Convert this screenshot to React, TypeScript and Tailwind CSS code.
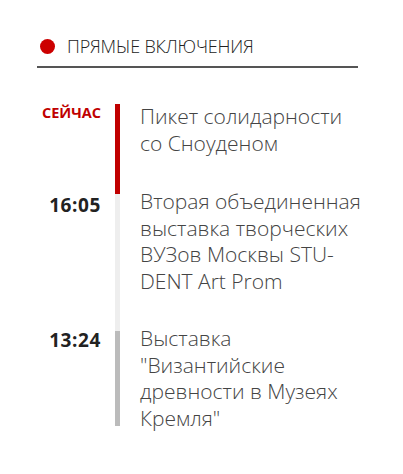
import React from 'react';

const items = [
  {
    time: 'СЕЙЧАС',
    now: true,
    title: 'Пикет солидарности со Сноуденом',
    bar: 'border-[#c00000]',
    rowH: 'h-[90px]',
    shift: '-mt-[1px]',
    timeShift: 'mt-[1px]',
  },
  {
    time: '16:05',
    now: false,
    title: 'Вторая объединенная выставка творческих ВУЗов Москвы STU-DENT Art Prom',
    bar: 'border-[#eeeeee]',
    rowH: 'h-[137px]',
    shift: '-mt-[6px]',
    timeShift: 'mt-[1px]',
  },
  {
    time: '13:24',
    now: false,
    title: 'Выставка "Византийские древности в Музеях Кремля"',
    bar: 'border-[#bbbbbb]',
    rowH: 'h-[95px]',
    shift: '-mt-[6px]',
    timeShift: '-mt-[1px]',
  },
];

export default function App() {
  return (
    <div className="min-h-[474px] w-[403px] bg-white pt-[38px] font-['Open_Sans',sans-serif]">
      <div className="ml-[37px] w-[321px]">
        {/* header */}
        <div className="flex items-center gap-[12px] pl-[3px] border-b-2 border-[#555555] pb-[11px]">
          <span className="h-[15px] w-[15px] rounded-full bg-[#cc0000] shrink-0" />
          <span className="text-[18px] leading-[17px] font-light text-[#222222] tracking-[-0.2px]">
            ПРЯМЫЕ ВКЛЮЧЕНИЯ
          </span>
        </div>

        {/* timeline */}
        <div className="mt-[36px]">
          {items.map((it) => (
            <div key={it.time} className={`flex ${it.rowH}`}>
              <div className="w-[64px] shrink-0 text-right">
                {it.now ? (
                  <div className="text-[14.5px] leading-[16px] font-bold text-[#c00000] mt-[1px]">
                    {it.time}
                  </div>
                ) : (
                  <div className={`text-[19px] leading-[20px] font-bold tracking-[0.6px] text-[#222222] ${it.timeShift}`}>
                    {it.time}
                  </div>
                )}
              </div>
              <div className={`ml-[14px] border-l-[5px] ${it.bar} pl-[20px] w-[250px] shrink-0`}>
                <p className={`text-[21px] leading-[26.5px] font-light text-[#444444] ${it.shift}`}>
                  {it.title}
                </p>
              </div>
            </div>
          ))}
        </div>
      </div>
    </div>
  );
}
